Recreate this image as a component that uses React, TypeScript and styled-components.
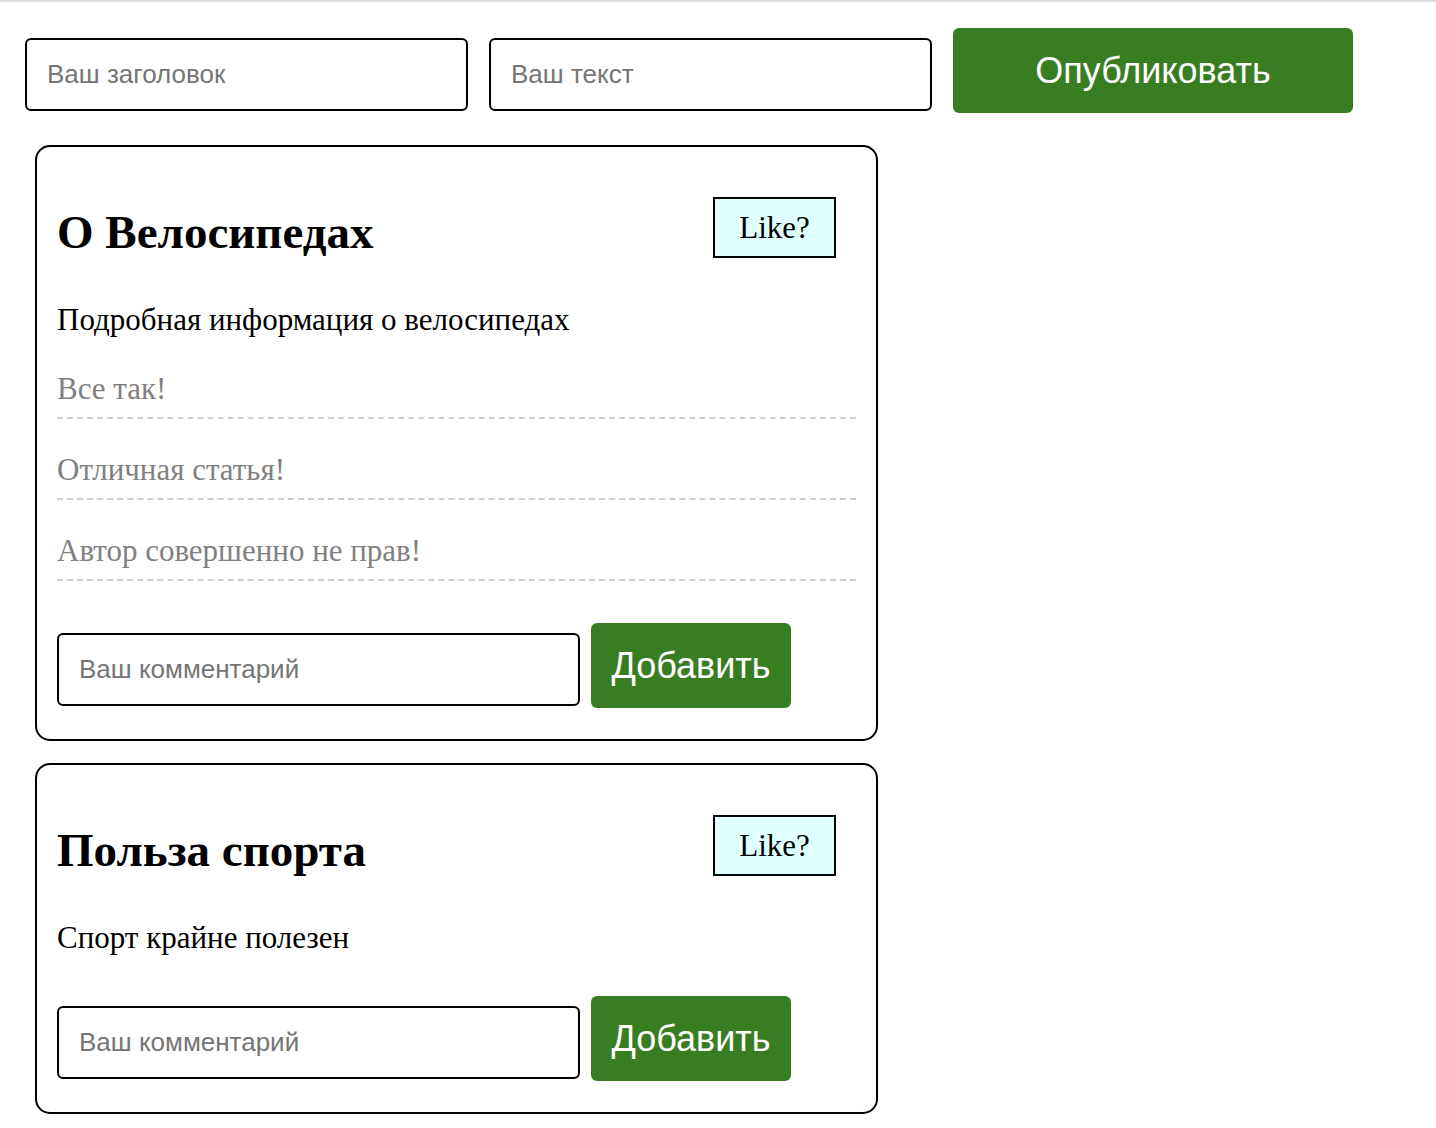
import React, { useState } from "react";
import styled, { createGlobalStyle } from "styled-components";

interface IPost {
  title: string;
  text: string;
  comments: string[];
}

const initialPosts: IPost[] = [
  {
    title: "О Велосипедах",
    text: "Подробная информация о велосипедах",
    comments: ["Все так!", "Отличная статья!", "Автор совершенно не прав!"],
  },
  {
    title: "Польза спорта",
    text: "Спорт крайне полезен",
    comments: [],
  },
];

const GlobalStyle = createGlobalStyle`
  html, body {
    margin: 0;
    padding: 0;
    background: #fff;
    font-family: "Liberation Serif", "Times New Roman", serif;
  }
`;

const Page = styled.div`
  border-top: 2px solid #dcdcdc;
  padding: 0 0 20px 25px;
`;

const Composer = styled.div`
  display: flex;
  align-items: baseline;
  gap: 21px;
  margin-top: 26px;
`;

const TextInput = styled.input<{ $width: number }>`
  box-sizing: border-box;
  width: ${(p) => p.$width}px;
  height: 73px;
  padding: 0 20px;
  border: 2px solid #000;
  border-radius: 6px;
  font-family: "Liberation Sans", Arial, sans-serif;
  font-size: 26px;
  color: #000;
  outline: none;

  ::placeholder {
    color: #757575;
  }
`;

const GreenButton = styled.button<{ $width: number }>`
  box-sizing: border-box;
  width: ${(p) => p.$width}px;
  height: 85px;
  border: none;
  border-radius: 6px;
  background: #397d22;
  color: #fff;
  font-family: "Liberation Sans", Arial, sans-serif;
  font-size: 36px;
  cursor: pointer;
`;

const Feed = styled.div`
  display: flex;
  flex-direction: column;
  gap: 22px;
  margin-top: 32px;
  margin-left: 10px;
`;

const Card = styled.div`
  box-sizing: border-box;
  width: 843px;
  padding: 50px 20px 31px;
  border: 2px solid #000;
  border-radius: 15px;
`;

const CardHeader = styled.div`
  display: flex;
  justify-content: space-between;
  align-items: center;
`;

const Title = styled.h2`
  margin: 9px 0 0;
  font-size: 47px;
  line-height: 50px;
  font-weight: bold;
`;

const LikeButton = styled.button<{ $liked: boolean }>`
  box-sizing: border-box;
  width: 123px;
  height: 61px;
  margin-right: 20px;
  border: 2px solid #000;
  border-radius: 0;
  background: ${(p) => (p.$liked ? "#ffd6e0" : "#e0ffff")};
  font-family: "Liberation Serif", "Times New Roman", serif;
  font-size: 31px;
  color: #000;
  cursor: pointer;
`;

const Description = styled.p`
  margin: 46px 0 0;
  font-size: 31px;
  line-height: 32px;
`;

const CommentList = styled.div`
  padding-top: 2px;
`;

const Comment = styled.div`
  margin-top: 35px;
  padding-bottom: 12px;
  border-bottom: 2px dashed #cfcfcf;
  color: #808080;
  font-size: 31px;
  line-height: 32px;
`;

const CommentForm = styled.div`
  display: flex;
  align-items: baseline;
  gap: 11px;
  margin-top: 42px;
`;

const Post = ({ post }: { post: IPost }) => {
  const [liked, setLiked] = useState(false);
  const [comments, setComments] = useState(post.comments);
  const [draft, setDraft] = useState("");

  const add = () => {
    if (!draft.trim()) return;
    setComments([...comments, draft]);
    setDraft("");
  };

  return (
    <Card>
      <CardHeader>
        <Title>{post.title}</Title>
        <LikeButton $liked={liked} onClick={() => setLiked(!liked)}>
          {liked ? "Liked!" : "Like?"}
        </LikeButton>
      </CardHeader>
      <Description>{post.text}</Description>
      {comments.length > 0 && (
        <CommentList>
          {comments.map((c, i) => (
            <Comment key={i}>{c}</Comment>
          ))}
        </CommentList>
      )}
      <CommentForm>
        <TextInput
          $width={523}
          placeholder="Ваш комментарий"
          value={draft}
          onChange={(e) => setDraft(e.target.value)}
        />
        <GreenButton $width={200} onClick={add}>
          Добавить
        </GreenButton>
      </CommentForm>
    </Card>
  );
};

const App = () => {
  const [posts, setPosts] = useState<IPost[]>(initialPosts);
  const [title, setTitle] = useState("");
  const [text, setText] = useState("");

  const publish = () => {
    if (!title.trim()) return;
    setPosts([...posts, { title, text, comments: [] }]);
    setTitle("");
    setText("");
  };

  return (
    <Page>
      <GlobalStyle />
      <Composer>
        <TextInput
          $width={443}
          placeholder="Ваш заголовок"
          value={title}
          onChange={(e) => setTitle(e.target.value)}
        />
        <TextInput
          $width={443}
          placeholder="Ваш текст"
          value={text}
          onChange={(e) => setText(e.target.value)}
        />
        <GreenButton $width={400} onClick={publish}>
          Опубликовать
        </GreenButton>
      </Composer>
      <Feed>
        {posts.map((p, i) => (
          <Post key={i} post={p} />
        ))}
      </Feed>
    </Page>
  );
};

export default App;
